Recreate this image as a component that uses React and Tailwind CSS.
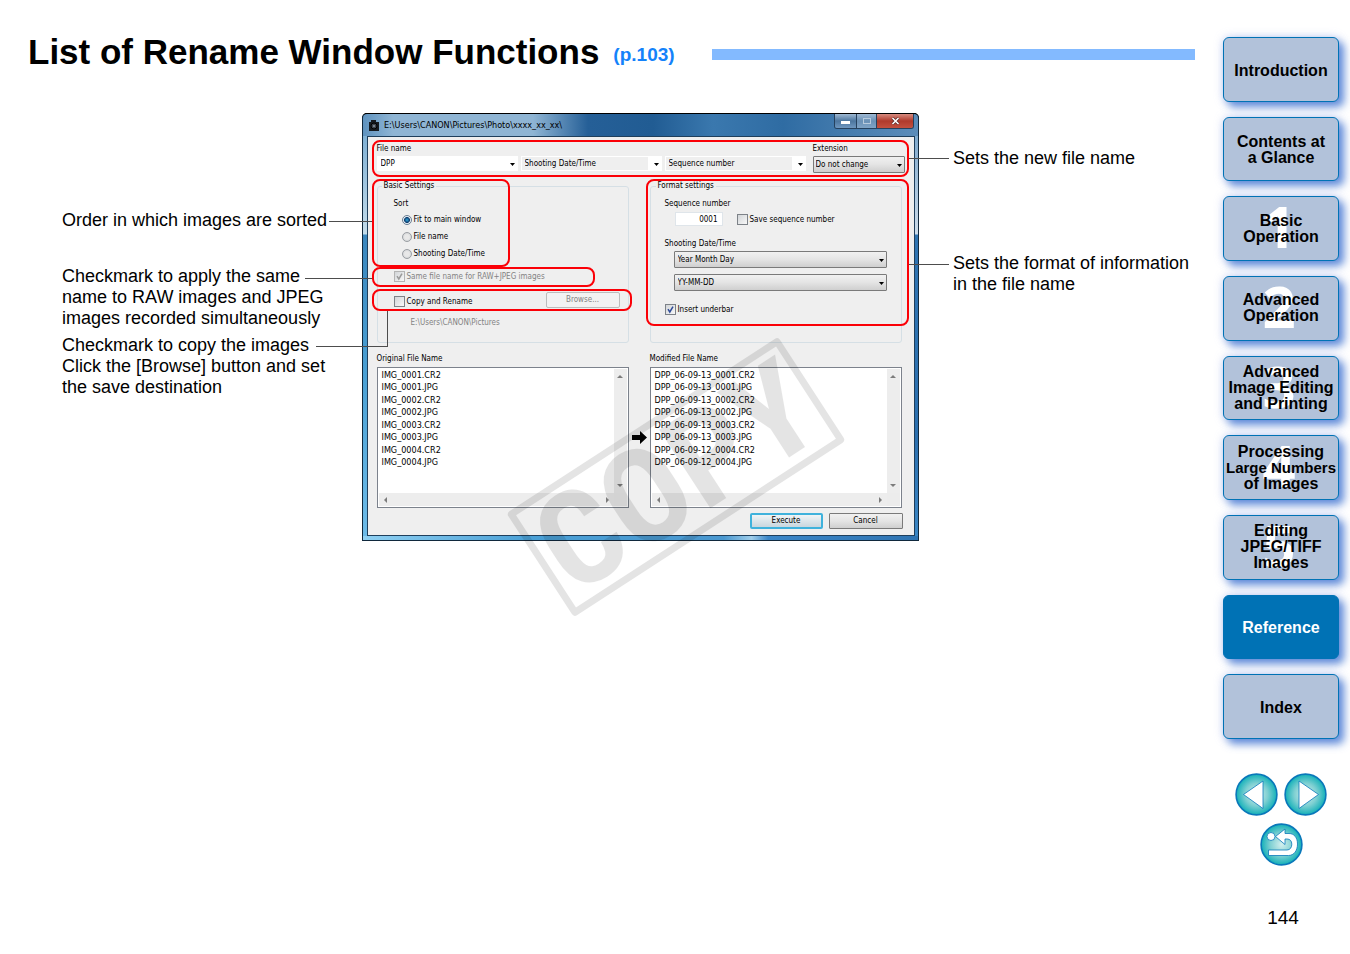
import React from "react";

const chapters = [
  { lines: ["Introduction"] },
  { lines: ["Contents at", "a Glance"] },
  { lines: ["Basic", "Operation"], digit: "1" },
  { lines: ["Advanced", "Operation"], digit: "2" },
  { lines: ["Advanced", "Image Editing", "and Printing"], digit: "3" },
  { lines: ["Processing", "Large Numbers", "of Images"], digit: "4", tight: 1 },
  { lines: ["Editing", "JPEG/TIFF", "Images"], digit: "5" },
  { lines: ["Reference"], active: true },
  { lines: ["Index"] },
];

const originals = [
  "IMG_0001.CR2",
  "IMG_0001.JPG",
  "IMG_0002.CR2",
  "IMG_0002.JPG",
  "IMG_0003.CR2",
  "IMG_0003.JPG",
  "IMG_0004.CR2",
  "IMG_0004.JPG",
];

const modified = [
  "DPP_06-09-13_0001.CR2",
  "DPP_06-09-13_0001.JPG",
  "DPP_06-09-13_0002.CR2",
  "DPP_06-09-13_0002.JPG",
  "DPP_06-09-13_0003.CR2",
  "DPP_06-09-13_0003.JPG",
  "DPP_06-09-12_0004.CR2",
  "DPP_06-09-12_0004.JPG",
];

function ChapterButton({ lines, digit, active, tight }) {
  return (
    <button
      type="button"
      className={
        "relative flex flex-col items-center justify-center rounded-md border border-[#0072b5] text-base leading-4 font-bold shadow-[5px_5px_8px_rgba(50,105,205,0.75),0_0_10px_rgba(130,150,225,0.4)] " +
        (active ? "bg-[#0072b5] text-white " : "bg-[#b2c2da] text-black ") +
        (digit ? "" : "pt-[3px]")
      }
    >
      {digit && (
        <span
          aria-hidden="true"
          className="absolute inset-0 flex items-center justify-center pr-1 pb-[5px] font-['Open_Sans',sans-serif] text-[58px] leading-none text-white"
        >
          {digit}
        </span>
      )}
      {lines.map((line, i) => (
        <span key={line} className={"relative whitespace-nowrap " + (tight === i ? "text-[15px] leading-4" : "")}>
          {line}
        </span>
      ))}
    </button>
  );
}

function RoundButton({ label, children }) {
  return (
    <button type="button" aria-label={label} className="size-[43px]">
      <svg viewBox="0 0 43 43" className="size-full">
        <defs>
          <radialGradient id="orb">
            <stop offset="0" stopColor="#d3efee" />
            <stop offset="0.55" stopColor="#7fd0d2" />
            <stop offset="1" stopColor="#12b0b8" />
          </radialGradient>
        </defs>
        <circle cx="21.5" cy="21.5" r="20.4" fill="url(#orb)" stroke="#0a78ba" strokeWidth="1.6" />
        {children}
      </svg>
    </button>
  );
}

function DownArrow() {
  return (
    <svg
      viewBox="0 0 5 3"
      aria-hidden="true"
      className="pointer-events-none absolute top-1/2 right-[3px] h-[3px] w-[5px] -translate-y-px"
    >
      <path d="M0 0h5L2.5 3z" fill="#000" />
    </svg>
  );
}

function Combo({ id, label, value, box, field }) {
  return (
    <div className={"relative flex " + box}>
      <select
        id={id}
        aria-label={label}
        defaultValue={value}
        className={"w-full appearance-none leading-3 outline-none " + field}
      >
        <option>{value}</option>
      </select>
      <DownArrow />
    </div>
  );
}

function Radio({ label, checked }) {
  return (
    <label className="flex h-[17px] items-center gap-[2px]">
      <input
        type="radio"
        name="sort"
        defaultChecked={checked}
        className="size-[10px] appearance-none rounded-full border border-[#9b9fa4] bg-[#dcdcdc] bg-[radial-gradient(circle,#e8e8e8_40%,#c4c8cc_100%)] checked:border-[#6c7f94] checked:bg-[radial-gradient(circle,#2fa8dc_0,#123f70_45%,#e6eef4_60%)]"
      />
      {label}
    </label>
  );
}

function Check({ label, checked, disabled }) {
  return (
    <label className={"flex items-center gap-[2px] " + (disabled ? "text-[#838383]" : "")}>
      <span className="relative flex">
        <input
          type="checkbox"
          defaultChecked={checked}
          disabled={disabled}
          className={
            "size-[11px] appearance-none border bg-[linear-gradient(135deg,#d2d5d8,#f8f8f8)] " +
            (disabled ? "border-[#b4b4b4]" : "border-[#7d8288]")
          }
        />
        {checked && (
          <svg viewBox="0 0 11 11" aria-hidden="true" className="pointer-events-none absolute inset-0 size-[11px]">
            <path d="M3 5.2 4.8 8 8 2.6" fill="none" stroke={disabled ? "#9a9a9a" : "#2f4c98"} strokeWidth="1.5" />
          </svg>
        )}
      </span>
      {label}
    </label>
  );
}

function Tri({ d }) {
  return (
    <svg viewBox="0 0 6 6" aria-hidden="true" className="size-[6px]">
      <path d={d} fill="#7c7c7c" />
    </svg>
  );
}

function FileList({ title, items }) {
  return (
    <section className="w-[252px]">
      <h3 className="h-4 leading-4">{title}</h3>
      <div className="grid h-[141px] grid-cols-[1fr_13px] grid-rows-[1fr_13px] border border-[#7c828c] bg-white p-px">
        <ul className="pl-[3px] text-[9px] leading-[13px]">
          {items.map((f, i) => (
            <li key={f} className={i % 2 ? "h-[13px]" : "h-3"}>
              {f}
            </li>
          ))}
        </ul>
        <div className="flex flex-col items-center justify-between bg-[#ededed] py-1">
          <Tri d="M0 5h6L3 2z" />
          <Tri d="M0 1h6L3 4z" />
        </div>
        <div className="flex items-center justify-between bg-[#ededed] px-[3px]">
          <Tri d="M5 0v6L2 3z" />
          <Tri d="M1 0v6l3-3z" />
        </div>
        <div className="bg-[#ececec]" />
      </div>
    </section>
  );
}

const silver = "border border-[#7a7a7a] bg-[linear-gradient(#f1f1f1,#e4e4e4_50%,#cfcfcf)] rounded-[1px]";

function RenameWindow() {
  return (
    <section className="relative w-[557px] shrink-0 rounded-t-[5px] bg-black font-['DejaVu_Sans_Condensed','Noto_Sans',sans-serif] text-[8px] text-black">
      <div className="overflow-hidden rounded-t-[5px] border border-[#10283c] border-t-black">
        <header className="flex h-[22px] items-start bg-[linear-gradient(90deg,#5f93bf,#8fb5d4_30px,#8fb5d4_170px,#255f97_225px,#215c93_290px,#3a78ae_350px,#2f6ca3_420px,#5c8dba)]">
          <div className="flex h-full flex-1 items-center gap-[4px] pl-[5px]">
            <svg viewBox="0 0 12 12" className="size-3">
              <path d="M1 3h2V1h5v2h3v9H1z" fill="#151a20" />
              <circle cx="6" cy="7" r="3" fill="#3c444e" stroke="#000" />
              <circle cx="6" cy="7" r="1" fill="#8b97a4" />
            </svg>
            <h2 className="text-[9px]">E:\Users\CANON\Pictures\Photo\xxxx_xx_xx\</h2>
          </div>
          <div className="mr-1 flex h-[15px] overflow-hidden rounded-b-[3px] border border-t-0 border-[#25415e]">
            <button
              type="button"
              aria-label="Minimize"
              className="flex w-[22px] items-center justify-center border-r border-[#25415e] bg-[linear-gradient(#9fb9d3,#4c769f_50%,#6f97bf)]"
            >
              <span className="mt-[3px] h-[3px] w-[9px] bg-white" />
            </button>
            <button
              type="button"
              aria-label="Maximize"
              className="flex w-[20px] items-center justify-center border-r border-[#25415e] bg-[linear-gradient(#9fb9d3,#6a91b6_50%,#7fa3c6)]"
            >
              <span className="h-[6px] w-[8px] border border-[#b8cbdd]" />
            </button>
            <button
              type="button"
              aria-label="Close"
              className="flex w-[36px] items-center justify-center bg-[linear-gradient(#d78c80,#b03a2c_50%,#c2503f)]"
            >
              <svg viewBox="0 0 9 8" className="h-2 w-[9px]">
                <path d="m1.5 1 6 6m0-6-6 6" stroke="#5b2a26" strokeWidth="3" />
                <path d="m1.5 1 6 6m0-6-6 6" stroke="#fff" strokeWidth="1.6" />
              </svg>
            </button>
          </div>
        </header>

        <div className="flex">
          <div className="w-1 bg-[linear-gradient(#7fb0d4,#c4dcea_98px,#3a86bd_99px,#4aa0d4_240px,#6dbbe8)]" />
          <div className="flex-1 border border-[#1f3f5c] bg-[#efefef] px-[9px] pb-[6px]">
            <div className="flex pt-1">
              <fieldset className="w-[436px]">
                <legend className="h-[15px] leading-4">File name</legend>
                <div className="flex gap-[3px]">
                  <Combo label="First part" value="DPP" box="h-[15px] w-[141px]" field="border border-white bg-white px-[3px]" />
                  <Combo
                    label="Second part"
                    value="Shooting Date/Time"
                    box="h-[15px] w-[141px]"
                    field="border border-white bg-[linear-gradient(90deg,#efefef_126px,#fff_126px)] px-[3px]"
                  />
                  <Combo
                    label="Third part"
                    value="Sequence number"
                    box="h-[15px] w-[141px]"
                    field="border border-white bg-[linear-gradient(90deg,#efefef_126px,#fff_126px)] px-[3px]"
                  />
                </div>
              </fieldset>
              <div>
                <label htmlFor="ext" className="block h-[15px] leading-4">
                  Extension
                </label>
                <Combo id="ext" value="Do not change" box="h-[17px] w-[92px]" field={silver + " px-[2px]"} />
              </div>
            </div>

            <div className="mt-2 flex gap-[21px]">
              <fieldset className="h-[162px] w-[252px] rounded-[3px] border border-[#d5dfe5] pl-4">
                <legend className="-ml-3 h-[10px] px-[2px] leading-[10px]">Basic Settings</legend>
                <div className="mt-1 flex h-4 items-center">Sort</div>
                <div className="flex flex-col pl-2">
                  <Radio label="Fit to main window" checked />
                  <Radio label="File name" />
                  <Radio label="Shooting Date/Time" />
                </div>
                <div className="mt-[6px] flex h-4 items-center">
                  <Check label="Same file name for RAW+JPEG images" checked disabled />
                </div>
                <div className="mt-[9px] flex h-4 items-center">
                  <div className="w-[152px]">
                    <Check label="Copy and Rename" />
                  </div>
                  <button
                    type="button"
                    disabled
                    className="mb-[2px] h-4 w-[74px] rounded-[2px] border border-[#bcbcbc] bg-[#f2f2f2] leading-none text-[#838383]"
                  >
                    Browse...
                  </button>
                </div>
                <p className="mt-[6px] pl-[17px] leading-4 text-[#838383]">E:\Users\CANON\Pictures</p>
              </fieldset>

              <fieldset className="h-[162px] w-[252px] rounded-[3px] border border-[#d5dfe5] pl-[14px]">
                <legend className="-ml-[9px] h-[10px] px-[2px] leading-[10px]">Format settings</legend>
                <label htmlFor="seq" className="mt-1 flex h-4 items-center">
                  Sequence number
                </label>
                <div className="flex h-4 items-center pl-[10px]">
                  <input
                    id="seq"
                    defaultValue="0001"
                    className="mr-[14px] h-[14px] w-12 border border-[#dfe5ea] bg-white pr-1 text-right"
                  />
                  <Check label="Save sequence number" />
                </div>
                <div className="mt-2 flex h-4 items-center">Shooting Date/Time</div>
                <div className="flex flex-col gap-[6px] pl-[9px]">
                  <Combo label="Date order" value="Year Month Day" box="h-[17px] w-[213px]" field={silver + " px-[3px]"} />
                  <Combo label="Date pattern" value="YY-MM-DD" box="h-[17px] w-[213px]" field={silver + " px-[3px]"} />
                </div>
                <div className="mt-[10px] flex h-4 items-center">
                  <Check label="Insert underbar" checked />
                </div>
              </fieldset>
            </div>

            <div className="mt-2 flex items-center gap-[3px]">
              <FileList title="Original File Name" items={originals} />
              <svg viewBox="0 0 15 13" className="mt-4 h-[13px] w-[15px]" aria-hidden="true">
                <path d="M0 4h8V0l7 6.500L8 13V9H0z" fill="#000" />
              </svg>
              <FileList title="Modified File Name" items={modified} />
            </div>

            <div className="mt-[5px] flex justify-end gap-[6px] pr-[2px]">
              <button
                type="button"
                className="h-4 w-[73px] rounded-[2px] border-2 border-[#3fb2dc] bg-[linear-gradient(#f0f4f6,#dce5ea_50%,#c9d6de)] leading-3"
              >
                Execute
              </button>
              <button type="button" className={"h-4 w-[74px] leading-[14px] " + silver}>
                Cancel
              </button>
            </div>
          </div>
          <div className="w-1 bg-[linear-gradient(#7fa9cd,#ccdcea_98px,#2f74b2_99px,#2b6fae_300px,#3a86c4)]" />
        </div>
        <div className="h-1 bg-[linear-gradient(90deg,#8fd0f2,#4aa0d6_30%,#4a98d0_65%,#9ecdea_70%,#3a86c8_73%,#2f74b2)]" />
      </div>

      <div className="absolute top-[27px] left-[10px] h-[37px] w-[537px] rounded-lg border-2 border-[#fb0007]" />
      <div className="absolute top-[66px] left-[10px] h-[88px] w-[138px] rounded-lg border-2 border-[#fb0007]" />
      <div className="absolute top-[154px] left-[10px] h-5 w-[223px] rounded-lg border-2 border-[#fb0007]" />
      <div className="absolute top-[176px] left-[10px] h-[22px] w-[260px] rounded-lg border-2 border-[#fb0007]" />
      <div className="absolute top-[66px] left-[284px] h-[147px] w-[263px] rounded-lg border-2 border-[#fb0007]" />

      <div className="absolute top-[108px] -left-[33px] h-px w-[43px] bg-[#4d4d4d]" />
      <div className="absolute top-[165px] -left-[57px] h-px w-[67px] bg-[#4d4d4d]" />
      <div className="absolute top-[198px] -left-[46px] h-9 w-[72px] border-r border-b border-[#4d4d4d]" />
      <div className="absolute top-[45px] left-[547px] h-px w-10 bg-[#4d4d4d]" />
      <div className="absolute top-[151px] left-[547px] h-px w-10 bg-[#4d4d4d]" />

      <div
        aria-hidden="true"
        className="pointer-events-none absolute top-[302px] left-[152px] flex h-[124px] w-[324px] -rotate-[33deg] items-center justify-center rounded-[4px] border-[7px] border-black font-['Liberation_Sans_Narrow','Roboto_Condensed','Noto_Sans_Condensed','Open_Sans_Condensed',Roboto,sans-serif] text-[132px] leading-none font-bold opacity-10"
      >
        COPY
      </div>
    </section>
  );
}

export default function App() {
  return (
    <div className="flex min-h-screen bg-white font-['Liberation_Sans',Arial,sans-serif] text-black">
      <main className="min-w-0 flex-1 pt-8 pr-7">
        <header className="flex h-10 items-center pl-7">
          <h1 className="text-[35px] leading-10 font-bold">List of Rename Window Functions</h1>
          <a href="#p103" className="mt-[6px] ml-[14px] text-[19px] font-bold text-[#1482fa]">
            (p.103)
          </a>
          <div className="mt-[5px] ml-[37px] h-[11px] flex-1 bg-[#83baff]" />
        </header>

        <div className="mt-[41px] flex text-lg leading-[21px]">
          <div className="w-[362px] shrink-0 pt-[97px] pl-[62px]">
            <p>Order in which images are sorted</p>
            <p className="mt-[35px]">
              Checkmark to apply the same
              <br />
              name to RAW images and JPEG
              <br />
              images recorded simultaneously
            </p>
            <p className="mt-[6px]">
              Checkmark to copy the images
              <br />
              Click the [Browse] button and set
              <br />
              the save destination
            </p>
          </div>
          <RenameWindow />
          <div className="pt-[35px] pl-[34px]">
            <p>Sets the new file name</p>
            <p className="mt-[84px]">
              Sets the format of information
              <br />
              in the file name
            </p>
          </div>
        </div>
      </main>

      <aside className="flex w-[127px] shrink-0 flex-col pt-[37px] pr-[11px]">
        <nav className="grid h-[702px] auto-rows-fr gap-[15px]">
          {chapters.map((c) => (
            <ChapterButton key={c.lines.join(" ")} {...c} />
          ))}
        </nav>
        <div className="mt-[34px] flex flex-wrap justify-center gap-x-[6px] gap-y-[7px]">
          <RoundButton label="Previous page">
            <path d="M8.500 21.500 28 8v27.500z" fill="#fff" stroke="#0a78ba" strokeWidth="0.8" />
          </RoundButton>
          <RoundButton label="Next page">
            <path d="M34.500 21.500 15 8v27.500z" fill="#fff" stroke="#0a78ba" strokeWidth="0.8" />
          </RoundButton>
          <RoundButton label="Return">
            <circle cx="11" cy="13.500" r="4" fill="#fff" stroke="#0a78ba" strokeWidth="0.8" />
            <path
              d="M15.500 13.500 25 6v4.500h4c5 0 8.500 4 8.500 10.500S34 32.500 28.500 32.500H8.500v-5.500H27c3 0 4.800-2.500 4.800-5.800s-1.800-5.200-4.800-5.200h-2v5.500z"
              fill="#fff"
              stroke="#0a78ba"
              strokeWidth="0.8"
            />
          </RoundButton>
        </div>
        <p className="mt-10 pl-1 text-center text-[19px] leading-6">144</p>
      </aside>
    </div>
  );
}
